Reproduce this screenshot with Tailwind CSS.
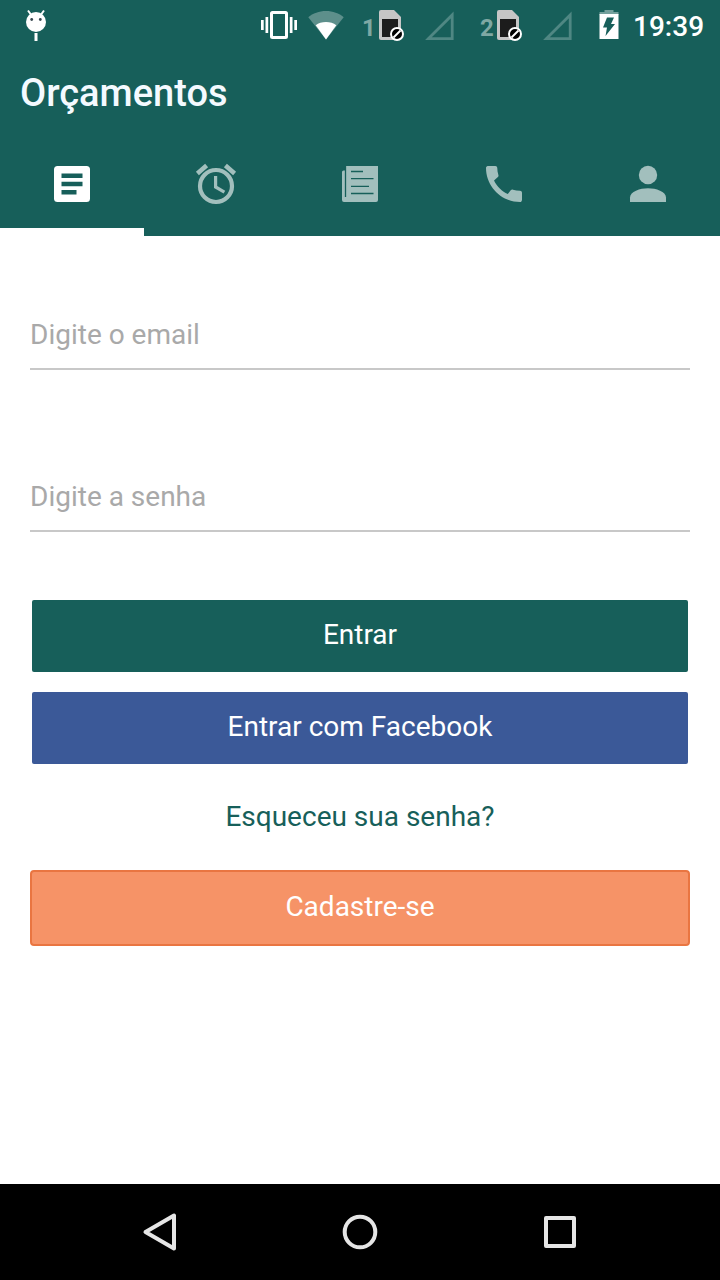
<!DOCTYPE html>
<html lang="pt-BR">
<head>
  <meta charset="UTF-8" />
  <meta name="viewport" content="width=device-width, initial-scale=1.0" />
  <title>Orçamentos</title>
  <script src="https://cdn.jsdelivr.net/npm/@tailwindcss/browser@4"></script>
</head>
<body class="bg-white h-screen flex flex-col overflow-hidden font-['Roboto',sans-serif]">

  <header class="bg-[#175f5a] h-[236px] shrink-0 flex flex-col text-white">
    <!-- Status bar -->
    <div class="h-[50px] flex items-center pl-6 pr-4">
      <svg class="w-6 h-8" viewBox="0 0 24 32" fill="#fff">
        <circle cx="12" cy="13" r="10" />
        <path d="M4 1.500l4 5.500M20 1.500l-4 5.500" stroke="#fff" stroke-width="2" />
        <rect x="10.500" y="24" width="3" height="8" />
        <circle cx="7.700" cy="10.500" r="1.400" fill="#37474f" />
        <circle cx="16.300" cy="10.500" r="1.400" fill="#37474f" />
      </svg>
      <svg class="w-9 h-8 ml-auto" viewBox="0 0 36 32" fill="#fff">
        <rect x="10.500" y="3.500" width="15" height="25" rx="1" fill="none" stroke="#fff" stroke-width="3" />
        <path d="M0 11h2.700v10H0zM4.500 8h2.700v16H4.500zM28.800 8h2.700v16h-2.700zM33.300 11H36v10h-2.700z" />
      </svg>
      <svg class="w-9 h-8 ml-[11px]" viewBox="0 0 36 32" fill="#fff">
        <path d="M18 30.500L.3 8.200C5 4.300 11 2 18 2s13 2.300 17.700 6.200z" opacity=".3" />
        <path d="M18 30.500L7.700 16.200C10.500 14 14 13 18 13s7.500 1 10.300 3.200z" />
      </svg>
      <span class="w-[14px] ml-[18px] pt-1.5 text-2xl font-bold text-[#7fa8a4]">1</span>
      <svg class="w-[26px] h-8 ml-[3px]" viewBox="0 0 26 32">
        <path d="M2 1h13l7 7v21a2 2 0 0 1-2 2H2a2 2 0 0 1-2-2V3a2 2 0 0 1 2-2z" fill="#c6c6c6" />
        <path d="M3 10h16v18H3z" fill="#1c1c1c" />
        <circle cx="18" cy="25" r="6" fill="#000" stroke="#fff" stroke-width="2" />
        <path d="M14.500 28.500l7-7" stroke="#fff" stroke-width="2" />
      </svg>
      <svg class="w-[29px] h-8 ml-5" viewBox="0 0 29 32" fill="none" stroke="#4f8783" stroke-width="2.800">
        <path d="M3.500 29.600L27.200 5.900v23.700z" />
      </svg>
      <span class="w-[14px] ml-[26px] pt-1.5 text-2xl font-bold text-[#7fa8a4]">2</span>
      <svg class="w-[26px] h-8 ml-[3px]" viewBox="0 0 26 32">
        <path d="M2 1h13l7 7v21a2 2 0 0 1-2 2H2a2 2 0 0 1-2-2V3a2 2 0 0 1 2-2z" fill="#c6c6c6" />
        <path d="M3 10h16v18H3z" fill="#1c1c1c" />
        <circle cx="18" cy="25" r="6" fill="#000" stroke="#fff" stroke-width="2" />
        <path d="M14.500 28.500l7-7" stroke="#fff" stroke-width="2" />
      </svg>
      <svg class="w-[29px] h-8 ml-5" viewBox="0 0 29 32" fill="none" stroke="#4f8783" stroke-width="2.800">
        <path d="M3.500 29.600L27.200 5.900v23.700z" />
      </svg>
      <svg class="w-5 h-8 ml-[27px]" viewBox="0 0 20 32">
        <path d="M5.500 1h9v2h5v3H.5V3h5z" fill="#74a09c" />
        <path d="M.5 5h19v25H.5z" fill="#fff" />
        <path d="M8 8.500h7L12 15h4L6.500 27l1.500-8.500H4z" fill="#175f5a" />
      </svg>
      <span class="w-[71px] ml-[14px] pt-1 text-[28px] font-medium leading-8 whitespace-nowrap">19:39</span>
    </div>

    <h1 class="h-[90px] pl-5 pt-[21px] text-[38px] leading-[44px] font-medium text-[#f4faff]">Orçamentos</h1>

    <!-- Tabs -->
    <nav class="h-24 grid grid-cols-5 text-[#a2bfbd]">
      <a href="#" class="flex justify-center pt-5 border-b-8 border-white text-white">
        <svg class="w-12 h-12" viewBox="0 0 48 48" fill="currentColor">
          <rect x="6" y="6" width="36" height="36" rx="3.500" />
          <path d="M13.500 13.500h21v4.500h-21zM13.500 21.800h21v4.400h-21zM13.500 30h15v4.500h-15z" fill="#175f5a" />
        </svg>
      </a>
      <a href="#" class="flex justify-center pt-5">
        <svg class="w-12 h-12" viewBox="0 0 24 24" fill="none" stroke="currentColor">
          <circle cx="12" cy="13" r="8" stroke-width="2.100" />
          <path d="M2.700 6.700l4.600-3.900M21.300 6.700l-4.600-3.900" stroke-width="2.300" />
          <path d="M11.800 8v5.500l4.400 2.600" stroke-width="1.600" />
        </svg>
      </a>
      <a href="#" class="flex justify-center pt-5">
        <svg class="w-12 h-12" viewBox="0 0 48 48" fill="currentColor">
          <path d="M10 6h32v34a2 2 0 0 1-2 2H8a2 2 0 0 1-2-2V12a1.500 1.500 0 0 1 1.500-1.500H10z" />
          <path d="M9.500 6v31M15 11.500h12M15 18.700h22.500M15 26.300h18M15 33.500h22.500" fill="none" stroke="#175f5a" stroke-width="1.300" />
        </svg>
      </a>
      <a href="#" class="flex justify-center pt-5">
        <svg class="w-12 h-12" viewBox="0 0 24 24" fill="currentColor">
          <path d="M20.010 15.380c-1.230 0-2.420-.2-3.530-.56-.35-.12-.74-.03-1.010.24l-1.570 1.970c-2.830-1.350-5.480-3.900-6.890-6.830l1.950-1.660c.27-.28.35-.67.24-1.020-.37-1.110-.56-2.300-.56-3.530 0-.54-.45-.99-.99-.99H4.190C3.650 3 3 3.240 3 3.990 3 13.280 10.730 21 20.010 21c.71 0 .99-.63.99-1.180v-3.450c0-.54-.45-.99-.99-.99z" />
        </svg>
      </a>
      <a href="#" class="flex justify-center pt-5">
        <svg class="w-12 h-12" viewBox="0 0 48 48" fill="currentColor">
          <circle cx="24" cy="15" r="9.200" />
          <path d="M6 42v-4.500C6 31.500 16 28.200 24 28.200s18 3.300 18 9.300V42z" />
        </svg>
      </a>
    </nav>
  </header>

  <main class="grow px-[30px] pt-[72px] text-[28px] leading-8">
    <form class="flex flex-col">
      <input type="email" placeholder="Digite o email" class="h-[62px] pb-2 border-b-2 border-[#c8c8c8] placeholder:text-[#a9a9a9] outline-none" />
      <input type="password" placeholder="Digite a senha" class="h-[62px] mt-[100px] pb-2 border-b-2 border-[#c8c8c8] placeholder:text-[#a9a9a9] outline-none" />
      <button type="button" class="h-[72px] mt-[68px] mx-0.5 pb-[3px] rounded-xs bg-[#175f5a] text-white">Entrar</button>
      <button type="button" class="h-[72px] mt-5 mx-0.5 pb-[3px] rounded-xs bg-[#3b5998] text-white">Entrar com Facebook</button>
      <a href="#" class="mt-[37px] text-center text-[#175f5a]">Esqueceu sua senha?</a>
      <button type="button" class="h-[76px] mt-[37px] pb-[3px] rounded-sm border-2 border-[#e97541] bg-[#f69367] text-white">Cadastre-se</button>
    </form>
  </main>

  <!-- Android navigation bar -->
  <footer class="bg-black h-24 shrink-0 flex justify-center items-center gap-[152px]">
    <svg class="w-12 h-12" viewBox="0 0 48 48" fill="none" stroke="#e6e6e6" stroke-width="4" stroke-linejoin="round">
      <path d="M9.500 24L38 7.500v33z" />
    </svg>
    <svg class="w-12 h-12" viewBox="0 0 48 48" fill="none" stroke="#e6e6e6" stroke-width="4">
      <circle cx="24" cy="24" r="15.300" />
    </svg>
    <svg class="w-12 h-12" viewBox="0 0 48 48" fill="none" stroke="#e6e6e6" stroke-width="4" stroke-linejoin="round">
      <path d="M10 10h28v28H10z" />
    </svg>
  </footer>

</body>
</html>
